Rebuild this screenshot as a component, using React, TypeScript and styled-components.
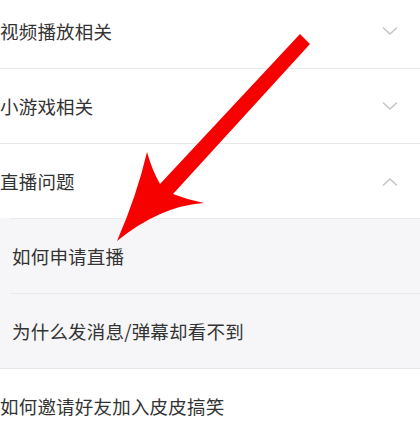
import React from 'react';
import styled, { createGlobalStyle } from 'styled-components';

const GlobalStyle = createGlobalStyle`
  body {
    margin: 0;
    background: #ffffff;
    font-family: 'Noto Sans CJK SC', 'Noto Sans', sans-serif;
  }
`

const Page = styled.div`
  position: relative;
  width: 420px;
  height: 424px;
  overflow: hidden;
  background: #ffffff;
`

const List = styled.div`
  display: flex;
  flex-direction: column;
  margin-top: -6px;
`

const Row = styled.div<{ $last?: boolean }>`
  height: 74px;
  display: flex;
  align-items: center;
  justify-content: space-between;
  padding-right: 22px;
  border-bottom: ${p => (p.$last ? 'none' : '1px solid #e8e8e8')};
  flex-shrink: 0;
`

const Label = styled.span`
  font-size: 18.5px;
  color: #333333;
  letter-spacing: 0.2px;
`

const SubGroup = styled.div`
  background: #f6f6f8;
  border-bottom: 1px solid #e8e8e8;
  display: flex;
  flex-direction: column;
`

const SubRow = styled.div`
  height: 74px;
  margin-left: 10px;
  padding-left: 2px;
  display: flex;
  align-items: center;
  border-top: 1px solid #eaeaec;
`

const Arrow = styled.svg`
  position: absolute;
  left: 0;
  top: 0;
  pointer-events: none;
`

function Chevron({ up }: { up?: boolean }) {
  return (
    <svg width="16" height="9" viewBox="0 0 16 9">
      <path
        d={up ? 'M1.5 8 L8 2 L14.5 8' : 'M1.5 1 L8 7 L14.5 1'}
        fill="none"
        stroke="#c4c4c4"
        strokeWidth="1.5"
        strokeLinecap="round"
        strokeLinejoin="round"
      />
    </svg>
  );
}

function App() {
  return (
    <Page>
      <GlobalStyle />
      <List>
        <Row>
          <Label>视频播放相关</Label>
          <Chevron />
        </Row>
        <Row>
          <Label>小游戏相关</Label>
          <Chevron />
        </Row>
        <Row $last>
          <Label>直播问题</Label>
          <Chevron up />
        </Row>
        <SubGroup>
          <SubRow>
            <Label>如何申请直播</Label>
          </SubRow>
          <SubRow>
            <Label>为什么发消息/弹幕却看不到</Label>
          </SubRow>
        </SubGroup>
        <Row>
          <Label>如何邀请好友加入皮皮搞笑</Label>
        </Row>
      </List>

      <Arrow width="420" height="424" viewBox="0 0 420 424">
        <path
          d="M300 34 L310 44 L173 194 Q188 200 204 203 Q160 206 117 241 Q137 195 147 152 Q152 170 160 184 Z"
          fill="#f70000"
        />
      </Arrow>
    </Page>
  );
}

export default App;
